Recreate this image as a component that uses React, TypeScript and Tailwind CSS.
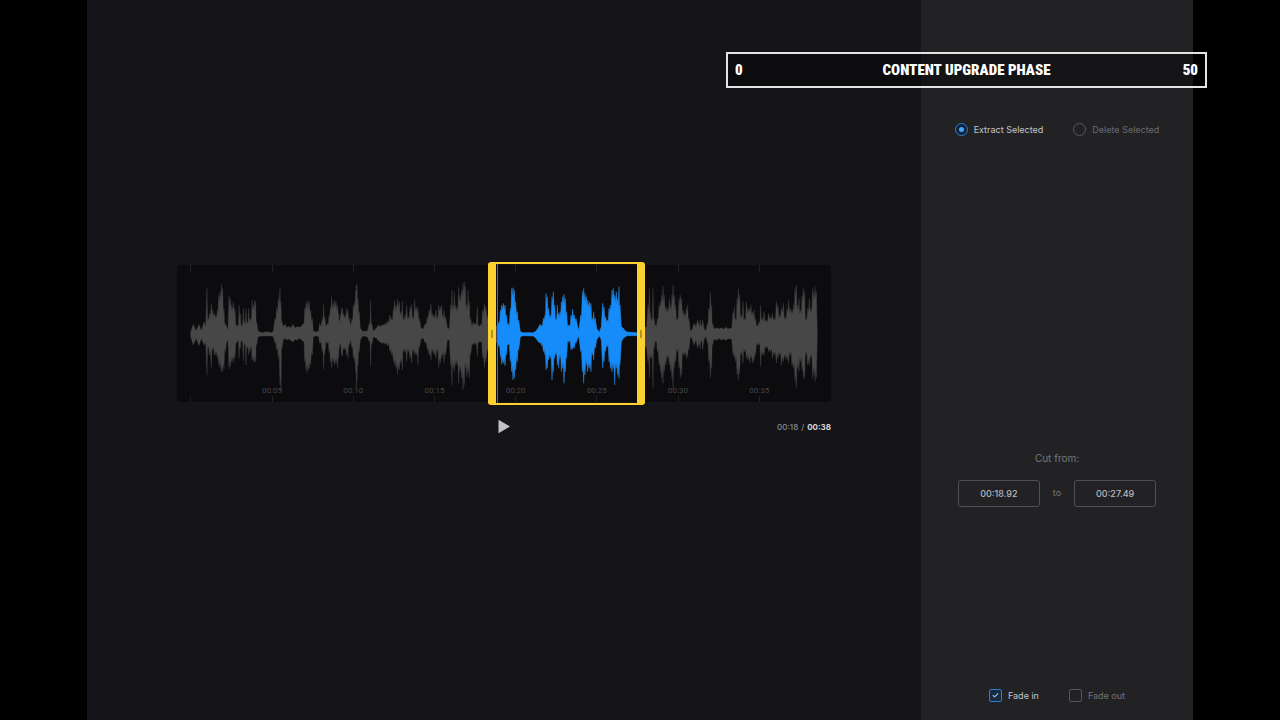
import { useMemo, useState } from "react";
import { Check } from "lucide-react";

type CutMode = "extract" | "delete";

// Each entry is "x,top,bottom", x counted from the start of its segment
const WAVE_SEGMENTS = [
    {
        start: -21,
        points: "62,230,245 70,208,270 78,228,250 87,208,272 94,228,250 102,200,270 107,215,262 111,100,360 115,190,280 118,175,300 124,145,338 128,165,285 133,175,300 138,180,300 142,165,310 146,120,330 150,110,338 154,88,350 158,100,350 162,160,340 166,205,290 170,215,260 174,225,255 177,122,342 181,130,335 185,150,320 190,140,322 195,160,310 200,210,265 204,210,260 207,150,312 211,175,280 215,210,260 220,160,318 224,200,270 228,160,330 232,200,280 236,160,300 240,190,290 243,190,280 246,135,315 250,150,320 254,135,322 257,140,320 260,200,270 264,228,245 275,233,243 290,230,243 305,233,243 310,228,245 315,190,265 320,160,285 325,130,310 330,98,390 333,140,410 336,200,280 340,215,255 345,208,250 350,218,255 356,214,252 362,219,256 369,208,261 375,219,253 381,215,256 388,217,250 395,213,255 400,205,260 404,160,320 408,145,345 411,135,355 415,145,345 418,138,340 422,165,330 427,190,300 430,228,245 440,231,242 446,228,245 449,205,265 453,215,260 457,190,290 461,148,342 464,185,300 468,215,260 473,205,265 477,180,290 481,155,320 485,125,338 490,145,320 494,135,330 498,140,325 503,150,338 506,175,310",
    },
    {
        start: 459,
        points: "28,195,280 31,180,270 34,160,300 37,158,305 41,175,285 45,180,285 50,160,300 54,165,310 58,190,270 62,215,255 66,190,280 70,150,310 74,140,320 77,105,350 79,88,400 81,90,380 84,130,330 88,170,290 91,220,255 98,229,243 112,228,245 118,205,260 122,135,335 125,205,270 130,229,245 140,218,250 146,210,258 152,215,262 158,208,266 165,205,268 172,198,272 180,180,290 185,190,300 190,160,320 194,135,330 198,150,340 203,132,358 208,140,345 213,170,325 217,138,345 221,190,290 225,180,290 230,150,320 235,185,290 240,155,310 245,148,325 249,185,290 254,135,300 259,155,300 264,160,330 268,190,280 273,220,252 280,222,250 286,205,265 292,185,285 297,165,300 303,145,315 307,175,290 312,180,300 318,165,310 322,185,290 326,150,338 331,155,325 335,150,310 338,180,300 342,165,325 347,185,300 352,218,255 358,222,255 362,150,330 366,105,390 369,150,340 373,110,350 377,150,330 381,155,330 386,95,385 390,120,350 395,105,370 399,85,405 403,80,390 406,95,340 410,150,365 414,105,355 418,140,370 422,190,300 426,215,265 430,200,270 436,205,268 442,155,305 446,210,265 452,208,262 458,165,310 463,145,338 468,155,320 474,180,290",
    },
    {
        start: 909,
        points: "52,215,260 57,200,275 61,165,305 65,150,328 70,145,325 75,150,332 80,180,300 84,205,270 88,215,265 91,160,320 95,100,350 99,98,375 103,105,370 107,140,345 112,170,320 116,195,285 121,230,245 130,233,242 160,233,243 168,228,250 175,218,260 180,208,265 185,210,272 190,190,290 195,180,300 198,115,345 202,125,340 206,160,315 211,180,310 216,125,375 220,110,350 224,150,310 228,190,300 232,150,330 236,175,340 240,170,310 244,140,350 248,125,340 252,118,385 256,130,350 260,170,310 265,210,262 268,210,260 273,180,285 278,162,283 283,180,280 288,190,265 293,215,250 297,225,245 302,180,290 307,110,350 311,100,385 315,115,360 319,125,330 323,135,350 328,140,340 333,145,350 337,190,300 341,170,315 346,190,280 350,220,255 358,232,242 364,215,255 368,145,340 372,155,320 377,185,290 382,195,275 387,160,320 391,150,340 396,105,350 400,100,340 404,120,390 409,110,340 413,130,360 417,95,370 420,150,330 424,215,260 430,220,250 436,228,245 442,231,242 470,233,242",
    },
    {
        start: 1389,
        points: "20,215,280 24,150,320 28,100,370 31,170,310 35,190,310 39,98,400 43,190,280 47,210,262 52,190,290 57,150,330 61,140,350 65,120,370 69,92,385 73,120,350 78,155,330 83,160,310 88,130,330 92,150,350 96,120,370 99,90,400 103,120,340 107,150,320 112,190,290 117,130,340 121,120,368 125,130,360 129,165,300 134,175,300 139,160,310 143,150,305 147,190,285 151,228,245 156,225,250 162,205,270 168,215,255 173,195,280 178,215,260 181,195,282 184,210,260 188,195,285 192,220,255 198,229,243 202,205,265 206,160,320 211,110,370 215,150,340 218,205,270 222,222,252 230,218,256 237,222,250 244,218,255 251,223,252 258,217,256 265,221,251 275,220,252 279,170,300 283,155,310 287,190,320 291,130,360 295,100,375 299,120,355 304,180,300 309,140,325 314,190,290 319,140,310 324,160,315 329,160,325 333,150,310 337,170,325 342,165,320 347,190,300 352,210,270 357,200,270 362,150,335 366,190,300 372,170,300 378,195,280 386,175,290 392,185,290 398,175,310 403,190,300 409,140,325 414,150,310 419,180,300 424,160,330 430,145,320 436,185,310 441,160,315 446,135,325 451,160,300 456,165,335 461,150,340 465,100,380 469,90,400 473,150,340 477,130,350 481,165,320 486,120,345 490,100,370 494,110,370 498,190,300 503,160,330 508,130,330 513,160,310 518,100,370 522,110,360 525,95,380 529,110,370 532,230,245",
    },
];

const MARKERS = [5, 10, 15, 20, 25, 30, 35];
const WAVE_WIDTH = 1962;
const WAVE_CENTER = 237;
const LEAD_IN = 40;
const UNITS_PER_SECOND = 48.72;

const toUnits = (seconds: number) => LEAD_IN + seconds * UNITS_PER_SECOND;
const toPercent = (seconds: number) => (toUnits(seconds) / WAVE_WIDTH) * 100;

const parseTime = (value: string) => {
    const [min, sec] = value.split(":");
    return (Number(min) || 0) * 60 + (Number(sec) || 0);
};

const formatTime = (seconds: number) => {
    const min = Math.floor(seconds / 60);
    const sec = Math.floor(seconds % 60);
    return `${String(min).padStart(2, "0")}:${String(sec).padStart(2, "0")}`;
};

interface IWaveformProps {
    from: number;
    to: number;
}

function Waveform({ from, to }: IWaveformProps) {
    const path = useMemo(() => {
        const peaks = WAVE_SEGMENTS.flatMap(({ start, points }) =>
            points.split(" ").map(point => {
                const [x, top, bottom] = point.split(",").map(Number);
                return { x: x + start, up: WAVE_CENTER - top, down: bottom - WAVE_CENTER };
            })
        );
        // a notch between neighbouring peaks keeps them apart
        const points = peaks.flatMap((peak, i) => {
            const next = peaks[i + 1];
            if (!next || Math.min(peak.up, next.up) < 25) return [peak];
            return [
                peak,
                {
                    x: (peak.x + next.x) / 2,
                    up: Math.min(peak.up, next.up) * 0.82,
                    down: Math.min(peak.down, next.down) * 0.82,
                },
            ];
        });
        const upper = points.map(p => `${p.x} ${WAVE_CENTER - p.up}`);
        const lower = [...points].reverse().map(p => `${p.x} ${WAVE_CENTER + p.down}`);
        return `M${[...upper, ...lower].join("L")}Z`;
    }, []);

    return (
        <svg className="block h-full w-full" viewBox="0 30 1962 411" preserveAspectRatio="none" aria-hidden="true">
            <defs>
                <clipPath id="selected">
                    <rect x={toUnits(from)} y="30" width={Math.max(0, toUnits(to) - toUnits(from))} height="411" />
                </clipPath>
            </defs>
            <path d={path} fill="#474748" stroke="#474748" />
            <path d={path} fill="#168bfa" stroke="#168bfa" clipPath="url(#selected)" />
        </svg>
    );
}

function Timeline({ from, to }: IWaveformProps) {
    return (
        <div className="relative h-[137px] rounded bg-[#0c0c0e]">
            <Waveform from={from} to={to} />

            {[0, ...MARKERS].map(second => (
                <div
                    key={second}
                    className="absolute inset-y-0 flex w-px flex-col items-center justify-between"
                    style={{ left: `${toPercent(second)}%` }}
                >
                    <span className="h-[7px] w-px bg-[#222224]" />
                    <div className="flex flex-col items-center">
                        {second > 0 && (
                            <span className="font-[Roboto,sans-serif] text-[8px] leading-[10px] text-[#454547]">
                                {formatTime(second)}
                            </span>
                        )}
                        <span className="h-1.5 w-px bg-[#222224]" />
                    </div>
                </div>
            ))}

            <div
                className="absolute -top-[3px] -bottom-[3px] -ml-[10px] flex justify-between rounded-[3px] border-y-2 border-[#fbd02f]"
                style={{ left: `${toPercent(from)}%`, width: `calc(${toPercent(to) - toPercent(from)}% + 18px)` }}
            >
                <div className="flex">
                    <button type="button" aria-label="Selection start" className="flex w-2 cursor-ew-resize items-center justify-center bg-[#fbd02f]">
                        <span className="h-2 w-0.5 bg-[#b39425]" />
                    </button>
                    <span className="ml-px w-px bg-[#68686a]" />
                </div>
                <button type="button" aria-label="Selection end" className="flex w-2 cursor-ew-resize items-center justify-center bg-[#fbd02f]">
                    <span className="h-2 w-0.5 bg-[#b39425]" />
                </button>
            </div>
        </div>
    );
}

interface IModeOptionProps {
    label: string;
    checked: boolean;
    onChange: () => void;
}

function ModeOption({ label, checked, onChange }: IModeOptionProps) {
    return (
        <label className={`flex cursor-pointer items-center gap-1.5 ${checked ? "text-[#c4c4c6]" : "text-[#6b6b6e]"}`}>
            <span className="grid place-items-center">
                <input
                    type="radio"
                    name="mode"
                    className="peer col-start-1 row-start-1 size-[13px] appearance-none rounded-full border border-[#5a5a5d] checked:border-[#2b7fd0] checked:bg-[#10253d]"
                    checked={checked}
                    onChange={onChange}
                />
                <span className="pointer-events-none col-start-1 row-start-1 hidden size-[5px] rounded-full bg-[#4da3f7] peer-checked:block" />
            </span>
            {label}
        </label>
    );
}

interface IFadeOptionProps {
    label: string;
    checked: boolean;
    onChange: (checked: boolean) => void;
}

function FadeOption({ label, checked, onChange }: IFadeOptionProps) {
    return (
        <label className={`flex cursor-pointer items-center gap-1.5 ${checked ? "text-[#c4c4c6]" : "text-[#737376]"}`}>
            <span className="grid place-items-center">
                <input
                    type="checkbox"
                    className="peer col-start-1 row-start-1 size-[13px] appearance-none rounded-[2px] border border-[#555558] checked:border-[#2b7fd0] checked:bg-[#172a40]"
                    checked={checked}
                    onChange={e => onChange(e.target.checked)}
                />
                <Check className="pointer-events-none col-start-1 row-start-1 hidden size-[7px] text-[#8fbdf0] peer-checked:block" strokeWidth={4} />
            </span>
            {label}
        </label>
    );
}

export default function App() {
    const [mode, setMode] = useState<CutMode>("extract");
    const [from, setFrom] = useState("00:18.92");
    const [to, setTo] = useState("00:27.49");
    const [fadeIn, setFadeIn] = useState(true);
    const [fadeOut, setFadeOut] = useState(false);

    const fromSeconds = parseTime(from);
    const toSeconds = parseTime(to);

    return (
        <div className="relative flex min-h-screen bg-black px-[87px] font-[Inter,sans-serif] text-[9px] leading-3">
            <main className="flex flex-1 flex-col justify-center bg-[#151519] px-[90px] pb-[21px]">
                <Timeline from={fromSeconds} to={toSeconds} />
                <div className="mt-[17px] flex h-[15px] items-center justify-between">
                    <button
                        type="button"
                        aria-label="Play"
                        className="cursor-pointer"
                        style={{ marginLeft: `${toPercent(fromSeconds)}%` }}
                    >
                        <svg className="block h-[15px] w-3" viewBox="0 0 12 15" fill="#c3c3c4">
                            <path d="M.5.8 12 7.5.5 14.2Z" />
                        </svg>
                    </button>
                    <p className="flex gap-[3px] text-[8px] font-medium text-[#8b8b8d]">
                        <span>{formatTime(fromSeconds)}</span>
                        <span>/</span>
                        <span className="font-bold text-[#d6d6d8]">{formatTime(38)}</span>
                    </p>
                </div>
            </main>

            <aside className="flex w-[272px] flex-col bg-[#222225]">
                <section className="flex h-[292px] items-start justify-center gap-[30px] pt-[123px]">
                    <ModeOption label="Extract Selected" checked={mode === "extract"} onChange={() => setMode("extract")} />
                    <ModeOption label="Delete Selected" checked={mode === "delete"} onChange={() => setMode("delete")} />
                </section>

                <section className="flex flex-1 flex-col items-center justify-center gap-4 border-y border-[#1f1f22]">
                    <h2 className="text-[10px] text-[#77777a]">Cut from:</h2>
                    <div className="flex items-center gap-[13px] text-[#77777a]">
                        <input
                            type="text"
                            aria-label="Cut from"
                            className="h-[27px] w-[82px] rounded-[3px] border border-[#505053] text-center font-medium text-[#b9b9bb] focus:outline-none"
                            value={from}
                            onChange={e => setFrom(e.target.value)}
                        />
                        <span>to</span>
                        <input
                            type="text"
                            aria-label="Cut to"
                            className="h-[27px] w-[82px] rounded-[3px] border border-[#505053] text-center font-medium text-[#b9b9bb] focus:outline-none"
                            value={to}
                            onChange={e => setTo(e.target.value)}
                        />
                    </div>
                </section>

                <section className="flex h-[54px] items-center justify-center gap-[30px] pt-[5px]">
                    <FadeOption label="Fade in" checked={fadeIn} onChange={setFadeIn} />
                    <FadeOption label="Fade out" checked={fadeOut} onChange={setFadeOut} />
                </section>
            </aside>

            <div className="absolute top-[52px] right-[73px] grid h-9 w-[481px] grid-cols-[1fr_auto_1fr] items-center border-2 border-[#e4e4e4] bg-black/40 px-[7px] font-['Roboto_Condensed',Roboto,sans-serif] text-[15px] leading-5 font-black text-white">
                <span>0</span>
                <span>CONTENT UPGRADE PHASE</span>
                <span className="text-right">50</span>
            </div>
        </div>
    );
}
